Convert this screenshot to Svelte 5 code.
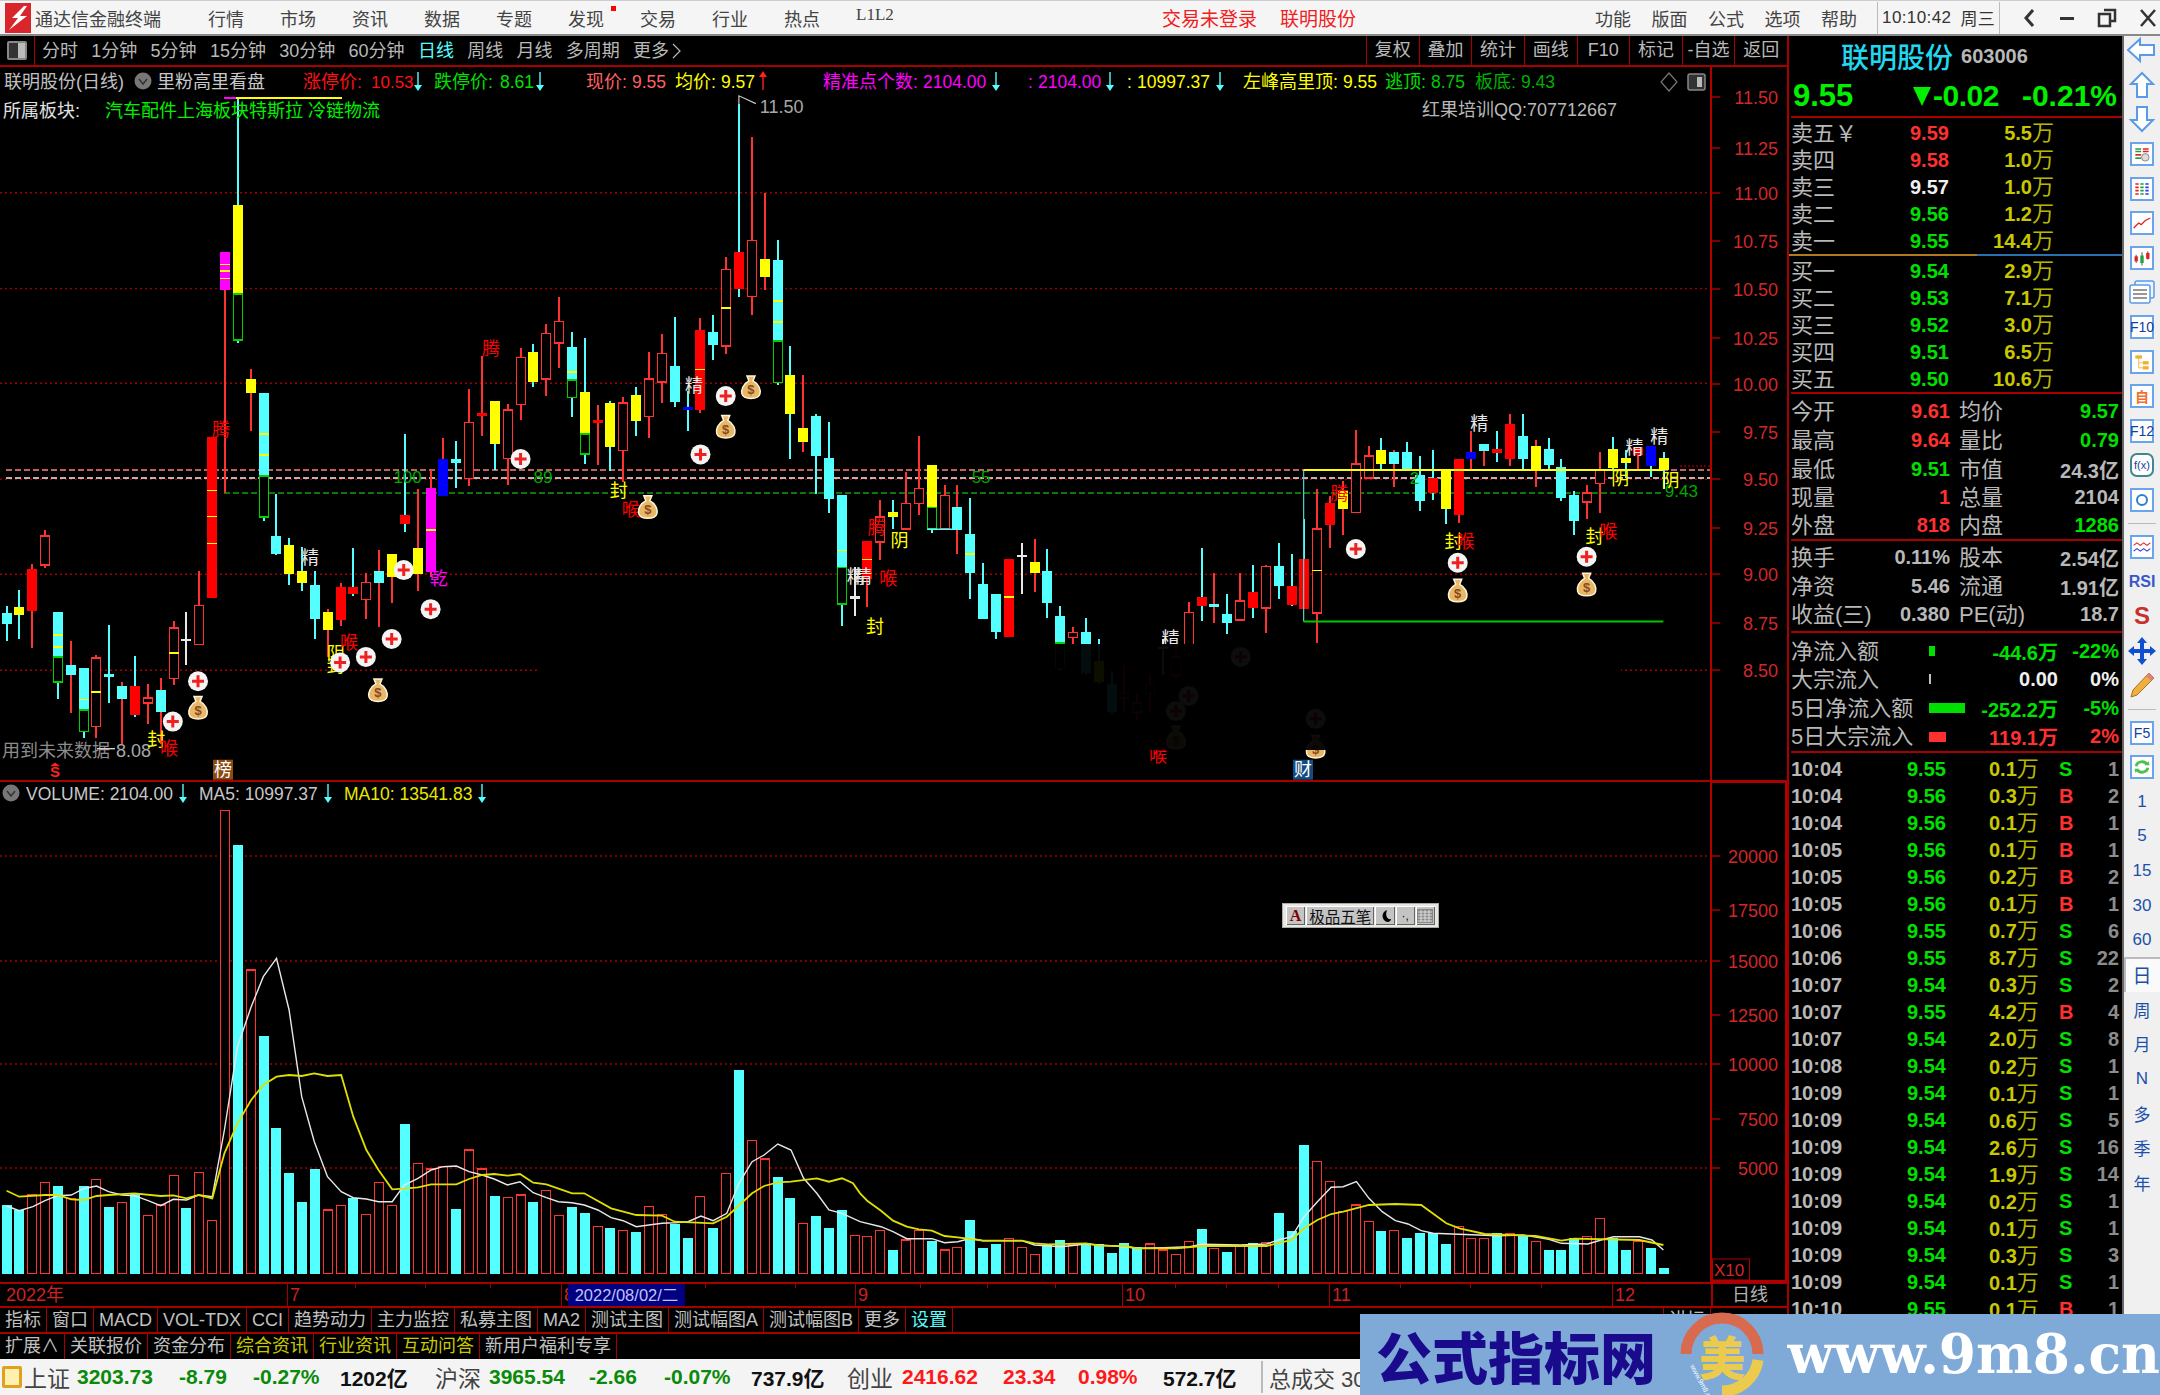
<script>
	// main-chart traces are in crop units: y = 60 + z / 2.178
	const yz = (z) => 60 + z / 2.178;
	const xi = (i) => 6.5 + 12.85 * i;
	const ax = (z) => z / 1.823;
	const bx = (z) => 860 + z / 1.668;
	const vy = (z) => 780 + z / 3;

	const COL = { r: '#ff3232', R: '#ff0000', c: '#54ffff', y: '#ffff00', m: '#ff00ff', b: '#0000ff', g: '#00d000', w: '#e8e8e8' };

	// hi, top, bottom, lo, body, wick, green-bottom, stripes
	const candles = [
		[1190, 1205, 1228, 1265, 'c', 'c'],
		[1155, 1192, 1208, 1262, 'y', 'c'],
		[1098, 1108, 1200, 1280, 'R', 'r'],
		[1023, 1037, 1100, 1107, 'r', 'r'],
		[1203, 1203, 1300, 1392, 'c', 'c', 1355, [1252, 1278]],
		[1265, 1317, 1339, 1423, 'c', 'r'],
		[1324, 1324, 1416, 1476, 'c', 'c', 1462, [1393]],
		[1295, 1302, 1452, 1476, 'r', 'r', 0, [1377]],
		[1230, 1340, 1340, 1400, 'c', 'c'],
		[1355, 1363, 1391, 1490, 'c', 'r'],
		[1298, 1363, 1427, 1430, 'R', 'c'],
		[1360, 1390, 1400, 1447, 'r', 'r'],
		[1345, 1373, 1420, 1490, 'c', 'r'],
		[1222, 1237, 1347, 1362, 'r', 'r', 0, [1292]],
		[1203, 1263, 1263, 1317, 'w', 'w'],
		[1112, 1188, 1273, 1273, 'r', 'r'],
		[821, 821, 1172, 1172, 'R', 'r', 0, [938, 994, 1053]],
		[419, 419, 502, 942, 'm', 'r', 0, [445, 460, 476]],
		[85, 315, 510, 617, 'y', 'c', 610],
		[674, 694, 725, 808, 'y', 'r'],
		[726, 726, 906, 1005, 'c', 'c', 995, [815, 860]],
		[945, 1037, 1075, 1078, 'c', 'c'],
		[1040, 1056, 1120, 1143, 'y', 'c'],
		[1060, 1112, 1140, 1157, 'y', 'c'],
		[1112, 1144, 1218, 1260, 'c', 'c'],
		[1195, 1203, 1241, 1300, 'y', 'r'],
		[1140, 1148, 1220, 1232, 'R', 'r'],
		[1063, 1148, 1162, 1168, 'R', 'c'],
		[1118, 1138, 1175, 1218, 'r', 'r'],
		[1068, 1112, 1140, 1235, 'c', 'r'],
		[1076, 1076, 1127, 1183, 'y', 'r'],
		[815, 991, 1011, 1028, 'R', 'c'],
		[935, 1063, 1120, 1157, 'y', 'r'],
		[893, 932, 1116, 1125, 'm', 'r', 0, [1024]],
		[824, 870, 950, 950, 'b', 'r'],
		[830, 870, 878, 932, 'c', 'c'],
		[716, 789, 911, 928, 'r', 'r'],
		[645, 772, 772, 818, 'R', 'r'],
		[742, 742, 836, 892, 'y', 'c'],
		[750, 762, 868, 925, 'r', 'r'],
		[628, 648, 750, 783, 'r', 'r'],
		[618, 635, 702, 712, 'y', 'c'],
		[575, 596, 695, 732, 'r', 'r'],
		[517, 570, 616, 670, 'r', 'r'],
		[592, 625, 697, 778, 'c', 'c', 735, [680]],
		[605, 723, 815, 880, 'y', 'c', 858],
		[752, 787, 787, 882, 'R', 'r'],
		[742, 746, 843, 895, 'y', 'c'],
		[735, 747, 851, 920, 'r', 'r'],
		[712, 730, 787, 818, 'y', 'c'],
		[635, 695, 776, 823, 'r', 'r'],
		[596, 639, 701, 748, 'r', 'r'],
		[560, 667, 745, 755, 'c', 'c'],
		[722, 759, 759, 807, 'b', 'c'],
		[563, 587, 763, 768, 'R', 'r', 0, [674]],
		[556, 592, 621, 653, 'c', 'c'],
		[430, 456, 623, 640, 'r', 'r', 0, [540]],
		[95, 419, 498, 516, 'R', 'c'],
		[168, 393, 515, 555, 'r', 'r'],
		[290, 434, 473, 500, 'y', 'r'],
		[393, 435, 612, 708, 'c', 'c', 702, [525, 570]],
		[622, 687, 770, 868, 'y', 'c'],
		[687, 801, 832, 853, 'y', 'r'],
		[772, 775, 862, 945, 'c', 'c'],
		[788, 867, 957, 987, 'c', 'c'],
		[948, 948, 1105, 1232, 'c', 'c', 1185, [1068]],
		[1105, 1170, 1170, 1210, 'w', 'w'],
		[1047, 1047, 1130, 1192, 'R', 'r', 0, [1088]],
		[958, 995, 1050, 1090, 'r', 'r'],
		[958, 984, 996, 1022, 'y', 'c'],
		[898, 966, 1022, 1022, 'r', 'r'],
		[820, 933, 966, 990, 'r', 'r'],
		[883, 883, 975, 1030, 'y', 'c', 1022],
		[925, 948, 1022, 1022, 'r', 'r'],
		[925, 974, 1022, 1075, 'c', 'r'],
		[955, 1033, 1117, 1173, 'c', 'c', 0, [1076]],
		[1095, 1141, 1218, 1218, 'c', 'c'],
		[1164, 1164, 1245, 1260, 'c', 'c'],
		[1087, 1087, 1257, 1257, 'R', 'r', 0, [1170]],
		[1052, 1080, 1080, 1163, 'w', 'w'],
		[1043, 1094, 1117, 1158, 'y', 'r'],
		[1065, 1112, 1183, 1216, 'c', 'c'],
		[1190, 1210, 1270, 1330, 'c', 'c', 1325],
		[1235, 1247, 1258, 1275, 'r', 'r'],
		[1216, 1246, 1335, 1340, 'c', 'c'],
		[1262, 1310, 1355, 1360, 'y', 'c'],
		[1330, 1360, 1420, 1425, 'c', 'c'],
		[1315, 1380, 1390, 1420, 'r', 'r'],
		[1380, 1400, 1420, 1440, 'r', 'r'],
		[1340, 1360, 1380, 1420, 'r', 'r'],
		[1262, 1280, 1280, 1340, 'w', 'w'],
		[1270, 1300, 1340, 1350, 'r', 'r'],
		[1180, 1203, 1275, 1275, 'r', 'r'],
		[1063, 1170, 1190, 1222, 'R', 'c'],
		[1118, 1184, 1192, 1227, 'c', 'r'],
		[1163, 1206, 1227, 1250, 'c', 'c'],
		[1118, 1178, 1220, 1222, 'r', 'r'],
		[1100, 1158, 1194, 1215, 'R', 'c'],
		[1100, 1103, 1193, 1247, 'r', 'r'],
		[1053, 1102, 1146, 1175, 'c', 'c'],
		[1076, 1145, 1187, 1190, 'R', 'c'],
		[1000, 1087, 1195, 1195, 'R', 'c'],
		[935, 1021, 1204, 1270, 'r', 'r', 0, [1112]],
		[950, 965, 1012, 1062, 'R', 'r'],
		[918, 938, 977, 1035, 'y', 'r'],
		[805, 880, 986, 986, 'r', 'r'],
		[840, 863, 910, 910, 'r', 'r'],
		[824, 850, 879, 893, 'y', 'c'],
		[850, 853, 879, 930, 'c', 'r'],
		[833, 853, 893, 893, 'c', 'c'],
		[862, 903, 960, 983, 'c', 'c'],
		[850, 911, 943, 958, 'R', 'c'],
		[893, 893, 977, 1010, 'y', 'c'],
		[870, 870, 990, 1008, 'R', 'r'],
		[808, 853, 869, 892, 'b', 'r'],
		[837, 837, 852, 885, 'c', 'r'],
		[808, 847, 855, 875, 'R', 'c'],
		[772, 792, 870, 885, 'R', 'r'],
		[772, 818, 868, 893, 'c', 'c'],
		[828, 841, 893, 930, 'y', 'r'],
		[824, 847, 882, 893, 'c', 'c'],
		[870, 886, 955, 960, 'c', 'c'],
		[938, 948, 1003, 1035, 'c', 'c'],
		[925, 943, 963, 1000, 'r', 'r'],
		[853, 893, 922, 987, 'r', 'r'],
		[822, 847, 888, 893, 'y', 'c'],
		[850, 866, 878, 910, 'y', 'c'],
		[842, 842, 860, 893, 'R', 'r'],
		[840, 840, 885, 908, 'b', 'c'],
		[853, 867, 893, 935, 'y', 'c']
	];

	const volumes = [
		'c1275', 'c1290', 'r1245', 'r1208', 'c1217', 'r1255', 'c1217', 'r1198', 'c1280', 'r1267', 'c1240', 'r1307', 'r1275', 'r1186', 'c1283', 'r1177', 'r1321', 'r92', 'c195', 'r570', 'c767', 'c1045', 'c1180', 'c1266', 'c1167', 'r1290', 'r1276', 'c1253', 'r1303', 'r1208', 'r1276', 'c1032', 'r1150', 'r1167', 'r1160', 'c1288', 'r1110', 'r1167', 'c1248', 'r1253', 'r1245', 'c1266', 'r1232', 'r1307', 'c1280', 'c1298', 'r1340', 'c1343', 'r1352', 'c1356', 'r1280', 'r1303', 'c1332', 'c1374', 'r1249', 'c1343', 'r1181', 'c870', 'r1082', 'r1137', 'c1190', 'c1253', 'r1331', 'c1307', 'c1343', 'c1290', 'r1366',
		'r1370', 'r1352', 'c1410', 'r1380', 'r1352', 'c1382', 'r1410', 'r1402', 'c1320', 'c1405', 'c1392', 'r1375', 'r1402', 'r1424', 'c1395', 'c1380', 'r1395', 'c1390', 'c1393', 'c1418', 'c1388', 'c1400', 'r1392', 'r1410', 'r1424', 'r1384', 'c1347', 'r1405', 'c1415', 'r1400', 'c1388', 'r1388', 'c1298', 'c1352', 'c1095', 'r1145', 'r1205', 'r1295', 'r1275', 'r1325', 'c1352', 'r1352', 'c1373', 'c1360', 'c1360', 'c1392', 'r1340', 'r1375', 'r1375', 'c1360', 'r1360', 'c1365', 'r1384', 'c1410', 'c1410', 'c1375', 'r1370', 'r1316', 'c1375', 'c1410', 'r1385', 'c1405', 'c1463'
	].map((v) => ({ kind: v[0], top: vy(+v.slice(1)) }));

	const line = (left, right) =>
		[...left.map(([x, y]) => `${ax(x).toFixed(1)},${vy(y).toFixed(1)}`), ...right.map(([x, y]) => `${bx(x).toFixed(1)},${vy(y).toFixed(1)}`)].join(' ');

	const ma5 = line(
		[[12, 1278], [35, 1292], [60, 1280], [82, 1262], [105, 1247], [130, 1245], [152, 1226], [176, 1218], [198, 1235], [222, 1245], [245, 1247], [270, 1262], [293, 1277], [316, 1258], [340, 1260], [362, 1245], [387, 1250], [409, 1050], [433, 800], [458, 680], [480, 590], [504, 535], [527, 690], [550, 950], [573, 1085], [597, 1190], [622, 1235], [644, 1253], [668, 1257], [690, 1265], [715, 1265], [737, 1215], [762, 1195], [786, 1170], [808, 1160], [832, 1158], [855, 1175], [879, 1185], [901, 1197], [925, 1215], [948, 1205], [972, 1238], [996, 1253], [1018, 1265], [1043, 1268], [1065, 1275], [1090, 1290], [1114, 1313], [1136, 1322], [1160, 1340], [1183, 1335], [1207, 1330], [1230, 1328], [1254, 1325], [1278, 1308], [1300, 1322], [1325, 1300], [1347, 1210], [1371, 1145], [1393, 1125], [1418, 1092], [1442, 1110], [1465, 1195], [1489, 1240], [1511, 1290], [1535, 1300], [1568, 1325]],
		[[35, 1340], [55, 1355], [78, 1376], [120, 1376], [141, 1388], [163, 1385], [185, 1375], [205, 1382], [270, 1382], [291, 1395], [336, 1400], [377, 1392], [441, 1400], [463, 1405], [507, 1403], [550, 1400], [570, 1393], [634, 1395], [678, 1392], [698, 1380], [720, 1370], [741, 1310], [763, 1265], [786, 1222], [806, 1220], [828, 1205], [849, 1255], [871, 1295], [893, 1322], [914, 1332], [936, 1352], [956, 1360], [1063, 1367], [1106, 1365], [1149, 1378], [1170, 1390], [1214, 1392], [1236, 1380], [1257, 1370], [1300, 1370], [1321, 1380], [1340, 1410]]
	);
	const ma10 = line(
		[[12, 1232], [35, 1250], [82, 1245], [105, 1245], [130, 1258], [152, 1260], [176, 1248], [198, 1245], [245, 1240], [293, 1248], [316, 1246], [340, 1255], [362, 1245], [387, 1255], [409, 1120], [433, 1030], [458, 960], [480, 915], [504, 890], [527, 885], [550, 888], [573, 880], [597, 888], [622, 885], [644, 1010], [668, 1110], [690, 1170], [715, 1228], [737, 1226], [762, 1222], [786, 1213], [832, 1213], [855, 1197], [879, 1185], [901, 1182], [925, 1187], [948, 1182], [972, 1208], [996, 1213], [1043, 1240], [1065, 1240], [1114, 1285], [1160, 1305], [1207, 1307], [1230, 1325], [1300, 1330], [1325, 1310], [1371, 1240], [1393, 1218], [1418, 1207], [1442, 1205], [1489, 1195], [1511, 1205], [1535, 1195], [1555, 1210], [1568, 1240]],
		[[12, 1262], [35, 1292], [55, 1322], [78, 1340], [98, 1348], [120, 1352], [141, 1368], [163, 1372], [205, 1382], [270, 1382], [291, 1390], [314, 1393], [377, 1390], [399, 1397], [441, 1398], [463, 1405], [528, 1405], [570, 1398], [678, 1398], [720, 1380], [741, 1345], [763, 1320], [786, 1302], [806, 1295], [849, 1275], [893, 1272], [936, 1275], [978, 1330], [1000, 1345], [1042, 1362], [1127, 1368], [1170, 1382], [1192, 1376], [1300, 1380], [1340, 1395]]
	);

	const grid = [289, 498, 704, 913, 1120, 1329].map(yz);
	const priceAxis = [['11.50', 97], ['11.25', 148], ['11.00', 193], ['10.75', 241], ['10.50', 289], ['10.25', 338], ['10.00', 384], ['9.75', 432], ['9.50', 479], ['9.25', 528], ['9.00', 574], ['8.75', 623], ['8.50', 670]];
	const volAxis = [['20000', 856], ['17500', 910], ['15000', 961], ['12500', 1015], ['10000', 1064], ['7500', 1119], ['5000', 1168]];

	const pluses = [[ax(361), 1353], [ax(315), 1441], [ax(949), 869], [ax(1277), 859], [ax(1323), 732], [ax(785), 1196], [ax(714), 1261], [ax(667), 1300], [ax(620), 1312], [ax(736), 1111], [bx(827), 1065], [bx(997), 1095], [bx(1212), 1082], [bx(635), 1300], [bx(548), 1385], [bx(527), 1418], [bx(760), 1435]];
	const bags = [[ax(361), 1410], [ax(689), 1372], [ax(1181), 973], [ax(1323), 798], [ax(1369), 712], [bx(997), 1155], [bx(1212), 1142], [bx(527), 1475], [bx(760), 1495]];

	const marks = [
		['腾', ax(403), 805, 'r'], ['腾', ax(895), 630, 'r'], ['腾', bx(28), 1020, 'r'], ['腾', bx(800), 945, 'r'],
		['精', ax(565), 1085, 'w'], ['精', ax(1265), 710, 'w'], ['精', ax(1560), 1125, 'w'], ['精', bx(5), 1125, 'w'], ['精', bx(1033), 792, 'w'], ['精', bx(1292), 845, 'w'], ['精', bx(1333), 822, 'w'], ['精', bx(518), 1262, 'w'],
		['封', ax(285), 1480, 'y'], ['封', ax(612), 1320, 'y'], ['封', ax(1128), 938, 'y'], ['封', bx(25), 1235, 'y'], ['封', bx(990), 1050, 'y'], ['封', bx(1225), 1038, 'y'],
		['阴', ax(612), 1293, 'y'], ['阴', bx(66), 1048, 'y'], ['阴', bx(1268), 912, 'y'], ['阴', bx(1352), 918, 'y'],
		['喉', ax(308), 1500, 'r'], ['喉', ax(636), 1270, 'r'], ['喉', ax(1150), 980, 'r'], ['喉', bx(47), 1130, 'r'], ['喉', bx(1010), 1050, 'r'], ['喉', bx(1248), 1028, 'r'], ['喉', bx(497), 1516, 'r'],
		['乾', ax(800), 1130, 'm']
	];

	const legend = [
		[4, '联明股份(日线)', '#c0c0c0', 18], [157, '里粉高里看盘', '#c8c8c8', 18],
		[303, '涨停价:', '#ff1010', 18], [371, '10.53', '#ff1010', 17],
		[434, '跌停价:', '#00e000', 18], [500, '8.61', '#00e000', 17.5],
		[586, '现价:', '#ff6060', 18], [632, '9.55', '#ff6060', 17.5],
		[675, '均价:', '#ffff00', 18], [721, '9.57', '#ffff00', 17.5],
		[823, '精准点个数:', '#ff00ff', 18], [923, '2104.00', '#ff00ff', 17.5],
		[1028, ':', '#ff00ff', 17.5], [1038, '2104.00', '#ff00ff', 17.5],
		[1127, ':', '#ffff00', 17.5], [1137, '10997.37', '#ffff00', 17.5],
		[1243, '左峰高里顶:', '#ffff00', 18], [1343, '9.55', '#ffff00', 17.5],
		[1385, '逃顶:', '#00e000', 18], [1431, '8.75', '#00c800', 17.5],
		[1475, '板底:', '#00b000', 18], [1521, '9.43', '#00b000', 17.5]
	];
	const legendArrows = [[418, 1, '#54ffff'], [540, 1, '#54ffff'], [763, -1, '#ff2020'], [996, 1, '#54ffff'], [1110, 1, '#54ffff'], [1220, 1, '#54ffff']];

	const menu = ['行情', '市场', '资讯', '数据', '专题', '发现', '交易', '行业', '热点', 'L1L2'];
	const menuRight = ['功能', '版面', '公式', '选项', '帮助'];
	const periods = [['分时'], ['1分钟'], ['5分钟'], ['15分钟'], ['30分钟'], ['60分钟'], ['日线', true], ['周线'], ['月线'], ['多周期'], ['更多']];
	const tools = ['复权', '叠加', '统计', '画线', 'F10', '标记', '-自选', '返回'];

	const months = [['7', 287], ['8', 561], ['9', 855], ['10', 1122], ['11', 1329], ['12', 1612]];
	const minor = [355, 425, 490, 628, 705, 795, 920, 987, 1055, 1175, 1226, 1278, 1400, 1470, 1541];

	const tabs1 = ['指标', '窗口', 'MACD', 'VOL-TDX', 'CCI', '趋势动力', '主力监控', '私募主图', 'MA2', '测试主图', '测试幅图A', '测试幅图B', '更多'];
	const tabs2 = [['扩展∧'], ['关联报价'], ['资金分布'], ['综合资讯', 'y'], ['行业资讯', 'y'], ['互动问答', 'y'], ['新用户福利专享']];

	const sells = [['卖五', '9.59', 'up', '5.5', '￥'], ['卖四', '9.58', 'up', '1.0'], ['卖三', '9.57', 'flat', '1.0'], ['卖二', '9.56', 'down', '1.2'], ['卖一', '9.55', 'down', '14.4']];
	const buys = [['买一', '9.54', '2.9'], ['买二', '9.53', '7.1'], ['买三', '9.52', '3.0'], ['买四', '9.51', '6.5'], ['买五', '9.50', '10.6']];

	const stats = [
		['今开', '9.61', 'up', '均价', '9.57', 'down'],
		['最高', '9.64', 'up', '量比', '0.79', 'down'],
		['最低', '9.51', 'down', '市值', '24.3亿', 'grey'],
		['现量', '1', 'up', '总量', '2104', 'grey'],
		['外盘', '818', 'up', '内盘', '1286', 'down']
	];
	const stats2 = [
		['换手', '0.11%', 'grey', '股本', '2.54亿', 'grey'],
		['净资', '5.46', 'grey', '流通', '1.91亿', 'grey'],
		['收益(三)', '0.380', 'grey', 'PE(动)', '18.7', 'grey']
	];
	const flows = [
		['净流入额', 6, 'down', '-44.6万', '-22%', 'down'],
		['大宗流入', 1.5, 'flat', '0.00', '0%', 'flat'],
		['5日净流入额', 36, 'down', '-252.2万', '-5%', 'down'],
		['5日大宗流入', 17, 'up', '119.1万', '2%', 'up']
	];
	const ticks = [
		['10:04', '9.55', '0.1', 'S', 1], ['10:04', '9.56', '0.3', 'B', 2], ['10:04', '9.56', '0.1', 'B', 1], ['10:05', '9.56', '0.1', 'B', 1], ['10:05', '9.56', '0.2', 'B', 2], ['10:05', '9.56', '0.1', 'B', 1], ['10:06', '9.55', '0.7', 'S', 6], ['10:06', '9.55', '8.7', 'S', 22], ['10:07', '9.54', '0.3', 'S', 2], ['10:07', '9.55', '4.2', 'B', 4], ['10:07', '9.54', '2.0', 'S', 8],
		['10:08', '9.54', '0.2', 'S', 1], ['10:09', '9.54', '0.1', 'S', 1], ['10:09', '9.54', '0.6', 'S', 5], ['10:09', '9.54', '2.6', 'S', 16], ['10:09', '9.54', '1.9', 'S', 14], ['10:09', '9.54', '0.2', 'S', 1], ['10:09', '9.54', '0.1', 'S', 1], ['10:09', '9.54', '0.3', 'S', 3], ['10:09', '9.54', '0.1', 'S', 1], ['10:10', '9.55', '0.1', 'B', 1]
	];
	const numbers = ['1', '5', '15', '30', '60'];
	const cycles = ['周', '月', 'N', '多', '季', '年'];

	const market = [
		['上证', 'name', 53], ['3203.73', 'down', 102], ['-8.79', 'down', 74], ['-0.27%', 'down', 87], ['1202亿', 'dark', 95],
		['沪深', 'name', 54], ['3965.54', 'down', 100], ['-2.66', 'down', 75], ['-0.07%', 'down', 87], ['737.9亿', 'dark', 96],
		['创业', 'name', 55], ['2416.62', 'up', 101], ['23.34', 'up', 75], ['0.98%', 'up', 85], ['572.7亿', 'dark', 98]
	];
</script>

<div class="app">
	<header class="menu">
		<svg class="logo" width="26" height="30" viewBox="0 0 26 30">
			<rect width="26" height="30" fill="#d8262c" />
			<path d="M19 3 L7 15 L13 15 L4 27 L22 13 L15 13 L22 3 Z" fill="#fff" />
		</svg>
		<span class="brand">通达信金融终端</span>
		<nav class="menu-main">
			{#each menu as item}
				<span class="menu-item" class:latin={item === 'L1L2'}>{item}{#if item === '发现'}<i class="dot"></i>{/if}</span>
			{/each}
		</nav>
		<span class="login">交易未登录</span>
		<span class="login stock">联明股份</span>
		<nav class="menu-right">
			{#each menuRight as item}
				<span>{item}</span>
			{/each}
		</nav>
		<div class="clock"><span>10:10:42</span><span>周三</span></div>
		<div class="win">
			<svg width="14" height="22" viewBox="0 0 14 22"><path d="M10 3 L3 11 L10 19" fill="none" stroke="#333" stroke-width="3" /></svg>
			<svg width="16" height="22" viewBox="0 0 16 22"><rect x="1" y="10" width="14" height="3" fill="#333" /></svg>
			<svg width="20" height="22" viewBox="0 0 20 22"><path d="M7 3 H18 V14 H14 M2 7 H13 V19 H2 Z" fill="none" stroke="#333" stroke-width="2.5" /></svg>
			<svg width="18" height="22" viewBox="0 0 18 22"><path d="M2 3 L16 19 M16 3 L2 19" stroke="#333" stroke-width="2.5" /></svg>
		</div>
	</header>

	<div class="workspace">
		<main class="left">
			<div class="toolbar">
				<div class="panel-toggle"><i></i></div>
				<div class="periods">
					{#each periods as [label, active]}
						<span class:active>{label}</span>
					{/each}
					<svg class="chev" width="9" height="16" viewBox="0 0 9 16"><path d="M1 1 L8 8 L1 15" fill="none" stroke="#b8b8b8" stroke-width="1.2" /></svg>
				</div>
				<div class="tool-btns">
					{#each tools as t}
						<span>{t}</span>
					{/each}
				</div>
			</div>

			<svg class="pane main-pane" viewBox="0 67 1787 713" width="1787" height="713">
				{#each grid as y}
					<line x1="0" x2="1711" y1={y} y2={y} class="dots" />
				{/each}
				<line x1="6" x2="1711" y1="470" y2="470" stroke="#ff8080" stroke-dasharray="6 3" stroke-width="1.3" />
				<line x1="6" x2="1711" y1="478" y2="478" stroke="#f0f0f0" stroke-dasharray="6 3" stroke-width="1.6" />
				<line x1="224" x2="1664" y1="493" y2="493" stroke="#10a010" stroke-dasharray="6 3" stroke-width="1.3" />
				<line x1="1680" x2="1711" y1="466" y2="466" stroke="#c00000" stroke-dasharray="2 2" />

				<line x1="224" x2="236" y1="98" y2="98" stroke="#ff00ff" stroke-width="2" />
				<line x1="236" x2="342" y1="98" y2="98" stroke="#ffff00" stroke-width="2" />

				<g shape-rendering="crispEdges">
					{#each candles as [hi, top, bot, lo, kind, wick, greenBot, stripes], i}
						{@const x = Math.round(xi(i))}
						<line x1={x} x2={x} y1={yz(hi)} y2={yz(lo)} stroke={COL[wick]} stroke-width="1.4" />
						{#if top === bot}
							<rect x={x - 5} y={yz(top) - 1} width="10" height="2.4" fill={COL[kind]} />
						{:else if kind === 'r'}
							<rect x={x - 4.5} y={yz(top)} width="9" height={(bot - top) / 2.178} fill="#000" stroke={COL.r} stroke-width="1.5" />
						{:else}
							<rect x={x - 5} y={yz(top)} width="10" height={(bot - top) / 2.178} fill={COL[kind]} />
						{/if}
						{#if greenBot}
							<rect x={x - 4.5} y={yz(bot)} width="9" height={(greenBot - bot) / 2.178} fill="#000" stroke={COL.g} stroke-width="1.5" />
						{/if}
						{#each stripes ?? [] as s}
							<rect x={x - 5} y={yz(s) - 0.8} width="10" height="1.6" fill="#ffff00" />
						{/each}
					{/each}
				</g>

				<polyline points="{bx(112)},{yz(1022)} {bx(170)},{yz(1022)}" fill="none" stroke="#54ffff" stroke-width="1.6" />
				<line x1={bx(740)} x2={bx(740)} y1={yz(893)} y2={yz(1223)} stroke="#54d0d0" stroke-width="1.2" />
				<line x1={bx(740)} x2={bx(1340)} y1={yz(893)} y2={yz(893)} stroke="#ffff00" stroke-width="2" />
				<line x1={bx(740)} x2={bx(1340)} y1={yz(1223)} y2={yz(1223)} stroke="#00c800" stroke-width="2" />

				<!-- price flag -->
				<path d="M{ax(1347)} {yz(96)} V{yz(78)} L{ax(1378)} {yz(95)}" fill="none" stroke="#c8c8c8" stroke-width="1.2" />
				<text x={ax(1385)} y={yz(102)} class="t" dominant-baseline="central" fill="#a8a8a8" font-size="18">11.50</text>
				<text x="2" y={yz(1505)} class="t" dominant-baseline="central" fill="#8c8c8c" font-size="18">用到未来数据</text>
				<line x1="97" x2="115" y1={yz(1500)} y2={yz(1500)} stroke="#d0d0d0" stroke-width="1.4" />
				<text x="116" y={yz(1505)} class="t" dominant-baseline="central" fill="#a8a8a8" font-size="18">8.08</text>

				{#each [[ax(743), 910, '100'], [ax(990), 910, '89'], [bx(202), 910, '55'], [bx(925), 912, '2'], [bx(1370), 940, '9.43']] as [x, z, t]}
					<text {x} y={yz(z)} class="t" text-anchor="middle" dominant-baseline="central" fill="#00a800" font-size="17">{t}</text>
				{/each}

				{#each marks as [t, x, z, c]}
					<text {x} y={yz(z)} class="t" text-anchor="middle" dominant-baseline="central" fill={c === 'r' ? '#ff0000' : COL[c]} font-size="18">{t}</text>
				{/each}

				{#each pluses as [x, z]}
					<g transform="translate({x} {yz(z)})">
						<circle r="10" fill="#f4f4f4" />
						<path d="M-6 0 H6 M0 -6 V6" stroke="#f02020" stroke-width="3" />
					</g>
				{/each}
				{#each bags as [x, z]}
					<g transform="translate({x} {yz(z)})">
						<path d="M-4 -11 H4 L2 -6 C8 -3 10 3 9 7 C8 11 4 11.5 0 11.5 C-4 11.5 -8 11 -9 7 C-10 3 -8 -3 -2 -6 Z" fill="#e8b868" stroke="#fff3d8" stroke-width="1.5" />
						<text y="3" text-anchor="middle" dominant-baseline="central" font-family="Liberation Sans, sans-serif" font-weight="700" font-size="13" fill="#8a4a20">$</text>
					</g>
				{/each}

				<!-- something sits over this part of the chart and blacks it out -->
				<rect x="537" y="644" width="1084" height="106" fill="#000" opacity=".95" />

				<path d="M55 {yz(1530)} L50 {yz(1538)} H60 Z" fill="#ff2020" />
				<text x="55" y={yz(1549)} class="t" text-anchor="middle" dominant-baseline="central" fill="#ff2020" font-weight="700" font-size="15">S</text>
				<rect x="213" y={yz(1524)} width="20" height="20" fill="#8a4a10" />
				<text x="223" y={yz(1546)} class="t" text-anchor="middle" dominant-baseline="central" fill="#fff" font-size="18">榜</text>
				<rect x="1293" y={yz(1524)} width="20" height="20" fill="#144a80" />
				<text x="1303" y={yz(1546)} class="t" text-anchor="middle" dominant-baseline="central" fill="#fff" font-size="18">财</text>

				<!-- legend -->
				{#each legend as [x, t, fill, size]}
					<text {x} y="82" class="t" dominant-baseline="central" {fill} font-size={size}>{t}</text>
				{/each}
				{#each legendArrows as [x, dir, c]}
					<path d="M{x} {81 - 9 * dir} V{81 + 5 * dir}" stroke={c} stroke-width="1.4" />
					<path d="M{x - 4} {81 + 4 * dir} H{x + 4} L{x} {81 + 10 * dir} Z" fill={c} />
				{/each}
				<circle cx="143" cy="81" r="8.5" fill="#777" />
				<path d="M139 79 L143 84 L147 79" fill="none" stroke="#333" stroke-width="1.5" />
				<text x="3" y="111" class="t" dominant-baseline="central" fill="#e0e0e0" font-size="18">所属板块:</text>
				<text x="105" y="111" class="t" dominant-baseline="central" fill="#00f000" font-size="18">汽车配件上海板块特斯拉 冷链物流</text>
				<text x="1422" y="110" class="t" dominant-baseline="central" fill="#b8b8b8" font-size="18">红果培训QQ:707712667</text>
				<path d="M1669 73 L1677 82 L1669 91 L1661 82 Z" fill="none" stroke="#777" stroke-width="1.2" />
				<rect x="1688" y="74" width="17" height="16" rx="2" fill="#333" stroke="#888" stroke-width="1.5" />
				<rect x="1697" y="77" width="5" height="10" fill="#bbb" />

				<!-- price axis -->
				<line x1="1711" x2="1711" y1="67" y2="780" class="axis" />
				{#each priceAxis as [t, y]}
					<line x1="1711" x2="1720" y1={y} y2={y} stroke="#b00000" stroke-width="1.4" />
					<text x="1778" y={y + 1} class="t num" text-anchor="end" dominant-baseline="central" font-size="18">{t}</text>
				{/each}
			</svg>

			<div class="vol-wrap">
				<svg class="pane vol-pane" viewBox="0 782 1787 500" width="1787" height="500">
					{#each [856, 961, 1064, 1168] as y}
						<line x1="0" x2="1711" y1={y} y2={y} class="dots" />
					{/each}
					<g shape-rendering="crispEdges">
						{#each volumes as v, i}
							{@const x = Math.round(xi(i))}
							{#if v.kind === 'c'}
								<rect x={x - 5} y={v.top} width="10" height={1273.5 - v.top} fill="#54ffff" />
							{:else}
								<rect x={x - 4.5} y={v.top} width="9" height={1273.5 - v.top} fill="#000" stroke="#ff3232" stroke-width="1.5" />
							{/if}
						{/each}
					</g>
					<polyline points={ma5} fill="none" stroke="#e8e8e8" stroke-width="1.4" />
					<polyline points={ma10} fill="none" stroke="#e0e000" stroke-width="1.8" />

					<circle cx="11" cy="793" r="8.5" fill="#777" />
					<path d="M7 791 L11 796 L15 791" fill="none" stroke="#333" stroke-width="1.5" />
					<text x="26" y="794" class="t" dominant-baseline="central" fill="#c8c8c8" font-size="17.5">VOLUME: 2104.00</text>
					<text x="199" y="794" class="t" dominant-baseline="central" fill="#c8c8c8" font-size="17.5">MA5: 10997.37</text>
					<text x="344" y="794" class="t" dominant-baseline="central" fill="#e8e800" font-size="17.5">MA10: 13541.83</text>
					{#each [183, 328, 482] as x}
						<path d="M{x} 784 V798" stroke="#54ffff" stroke-width="1.4" />
						<path d="M{x - 4} 797 H{x + 4} L{x} 803 Z" fill="#54ffff" />
					{/each}

					<rect x="1711" y="782" width="75" height="499" fill="none" stroke="#b00000" stroke-width="2" />
					{#each volAxis as [t, y]}
						<line x1="1711" x2="1720" y1={y} y2={y} stroke="#b00000" stroke-width="1.4" />
						<text x="1778" y={y + 1} class="t num" text-anchor="end" dominant-baseline="central" font-size="18">{t}</text>
					{/each}
					<rect x="1712.5" y="1259" width="37" height="21" fill="none" stroke="#b00000" />
					<text x="1714" y="1270" class="t num" dominant-baseline="central" font-size="17">X10</text>
				</svg>
				<div class="ime">
					<b>A</b>
					<span class="ime-name">极品五笔</span>
					<span class="ime-key"><svg width="12" height="14" viewBox="0 0 12 14"><path d="M8 1 C2 3 2 11 8 13 C11 13 12 11 12 10 C8 11 6 6 8 1 Z" /></svg></span>
					<span class="ime-key small">·,</span>
					<span class="ime-key"><svg width="16" height="14" viewBox="0 0 16 14"><rect width="16" height="14" fill="#888" /><path d="M1 3 H15 M1 6 H15 M1 9 H15 M1 12 H15 M4 1 V13 M8 1 V13 M12 1 V13" stroke="#ddd" /></svg></span>
				</div>
			</div>

			<div class="xaxis">
				<span class="year">2022年</span>
				{#each months as [t, x]}
					<span class="month" style="left:{x}px">{t}</span>
				{/each}
				{#each minor as x}
					<i class="tick" style="left:{x}px"></i>
				{/each}
				<span class="cursor">2022/08/02/二</span>
				<span class="period-name">日线</span>
			</div>

			<div class="tabs">
				{#each tabs1 as t}
					<span>{t}</span>
				{/each}
				<span class="cyan">设置</span>
				<span class="tail">讲坛</span>
			</div>
			<div class="tabs second">
				{#each tabs2 as [t, c]}
					<span class:yellow={c === 'y'}>{t}</span>
				{/each}
			</div>
		</main>

		<aside class="quote">
			<div class="q-title"><b>联明股份</b><span>603006</span></div>
			<div class="q-price"><span class="last">9.55</span><span class="chg"><i></i>-0.02</span><span class="pct">-0.21%</span></div>

			<section class="book sells">
				{#each sells as [label, price, cls, vol, mark]}
					<div class="book-row">
						<span class="lab">{label}{#if mark}<em>{mark}</em>{/if}</span>
						<span class="n {cls}">{price}</span>
						<span class="vol"><b>{vol}</b>万</span>
					</div>
				{/each}
			</section>
			<div class="mid"><i></i><i></i></div>
			<section class="book buys">
				{#each buys as [label, price, vol]}
					<div class="book-row">
						<span class="lab">{label}</span>
						<span class="n down">{price}</span>
						<span class="vol"><b>{vol}</b>万</span>
					</div>
				{/each}
			</section>

			<section class="stats">
				{#each stats as [a, av, ac, b, bv, bc]}
					<div class="stat-row">
						<div class="pair"><span class="lab">{a}</span><span class="n {ac}">{av}</span></div>
						<div class="pair"><span class="lab">{b}</span><span class="n {bc}">{bv}</span></div>
					</div>
				{/each}
			</section>
			<section class="stats tight">
				{#each stats2 as [a, av, ac, b, bv, bc]}
					<div class="stat-row">
						<div class="pair"><span class="lab">{a}</span><span class="n {ac}">{av}</span></div>
						<div class="pair"><span class="lab">{b}</span><span class="n {bc}">{bv}</span></div>
					</div>
				{/each}
			</section>
			<section class="flows">
				{#each flows as [label, w, barCls, val, pct, cls]}
					<div class="flow-row">
						<span class="lab">{label}</span>
						<span class="bar-cell"><i class={barCls} style="width:{w}px"></i></span>
						<span class="n {cls}">{val}</span>
						<span class="n {cls}">{pct}</span>
					</div>
				{/each}
			</section>
			<section class="ticks">
				{#each ticks as [time, price, vol, side, count]}
					<div class="tick-row">
						<span class="n grey">{time}</span>
						<span class="n down">{price}</span>
						<span class="vol tick-vol"><b>{vol}</b>万</span>
						<span class="n {side === 'S' ? 'down' : 'up'}">{side}</span>
						<span class="n count">{count}</span>
					</div>
				{/each}
			</section>
		</aside>

		<aside class="sidebar">
			<div class="ic first"><svg width="32" height="28" viewBox="0 0 32 28"><path d="M2 14 L14 3 V9 H28 V19 H14 V25 Z" fill="#fff" stroke="#5a9be8" stroke-width="2" /></svg></div>
			<div class="ic"><svg width="28" height="28" viewBox="0 0 28 28"><path d="M14 2 L25 13 H19 V26 H9 V13 H3 Z" fill="#fff" stroke="#5a9be8" stroke-width="2" /></svg></div>
			<div class="ic"><svg width="28" height="28" viewBox="0 0 28 28"><path d="M14 26 L25 15 H19 V2 H9 V15 H3 Z" fill="#fff" stroke="#5a9be8" stroke-width="2" /></svg></div>
			<div class="ic"><svg class="box" viewBox="0 0 24 24"><path d="M4 6 H11 M4 9 H11" stroke="#20a040" stroke-width="2" /><path d="M13 6 H20 M13 9 H20" stroke="#e02020" stroke-width="2" /><path d="M4 13 H11" stroke="#e02020" stroke-width="2" /><path d="M4 17 H11" stroke="#20a040" stroke-width="2" /><circle cx="16" cy="16" r="4.5" fill="#ddd" stroke="#777" /></svg></div>
			<div class="ic"><svg class="box" viewBox="0 0 24 24"><path d="M4 6 H8 M4 10 H8 M4 14 H8 M4 18 H8" stroke="#e02020" stroke-width="2" /><path d="M10 6 H14 M10 10 H14 M10 14 H14 M10 18 H14" stroke="#20a040" stroke-width="2" /><path d="M16 6 H20 M16 10 H20 M16 14 H20 M16 18 H20" stroke="#2040e0" stroke-width="2" /></svg></div>
			<div class="ic"><svg class="box" viewBox="0 0 24 24"><path d="M2 18 L8 12 L11 14 L16 9 L22 6" fill="none" stroke="#e02020" stroke-width="1.6" /></svg></div>
			<div class="ic"><svg class="box" viewBox="0 0 24 24"><path d="M5 8 V18 M12 5 V21 M19 4 V14" stroke="#333" /><rect x="3" y="10" width="4" height="6" fill="#e02020" /><rect x="10" y="9" width="4" height="9" fill="#20a040" /><rect x="17" y="6" width="4" height="7" fill="#e02020" /></svg></div>
			<div class="ic"><svg width="28" height="26" viewBox="0 0 28 26"><rect x="7" y="2" width="19" height="17" rx="2" fill="#eef4ff" stroke="#5a9be8" stroke-width="1.5" /><rect x="2" y="6" width="20" height="18" rx="2" fill="#fff" stroke="#5a9be8" stroke-width="1.5" /><path d="M5 11 H19 M5 15 H19 M5 19 H19" stroke="#777" stroke-width="1.6" /></svg></div>
			<div class="ic"><span class="box txt">F10</span></div>
			<div class="ic"><svg class="box" viewBox="0 0 24 24"><rect x="4" y="4" width="8" height="4" fill="#f0b030" /><path d="M8 8 V19 H13 M8 13 H13" stroke="#f0b030" fill="none" /><rect x="13" y="11" width="7" height="4" fill="#f0b030" /><rect x="13" y="17" width="7" height="4" fill="#f0b030" /></svg></div>
			<div class="ic"><span class="box txt orange">自</span></div>
			<div class="ic"><span class="box txt">F12</span></div>
			<div class="ic"><span class="box txt fx">f(x)</span></div>
			<div class="ic"><svg class="box" viewBox="0 0 24 24"><circle cx="12" cy="12" r="6" fill="none" stroke="#2f7fd0" stroke-width="2.4" /></svg></div>
			<hr />
			<div class="ic"><svg class="box" viewBox="0 0 24 24"><path d="M2 10 L6 7 L10 10 L14 7 L18 10 L22 7" fill="none" stroke="#e02020" stroke-width="1.3" /><path d="M2 17 L6 14 L10 17 L14 14 L18 17 L22 14" fill="none" stroke="#3030e0" stroke-width="1.3" /></svg></div>
			<div class="ic"><span class="rsi">RSI</span></div>
			<div class="ic"><span class="dollar">S</span></div>
			<div class="ic"><svg width="30" height="30" viewBox="0 0 30 30"><path d="M15 1 L20 7 H17 V13 H23 V10 L29 15 L23 20 V17 H17 V23 H20 L15 29 L10 23 H13 V17 H7 V20 L1 15 L7 10 V13 H13 V7 H10 Z" fill="#1050d0" /></svg></div>
			<div class="ic"><svg width="28" height="30" viewBox="0 0 28 30"><path d="M21 3 L26 8 L9 25 L3 27 L5 20 Z" fill="#f0b040" stroke="#a87020" /><path d="M21 3 L26 8 L23 11 L18 6 Z" fill="#e08080" /></svg></div>
			<hr />
			<div class="ic"><span class="box txt">F5</span></div>
			<div class="ic"><svg class="box" viewBox="0 0 24 24"><path d="M5 11 C6 5 15 4 18 9 M19 13 C18 19 9 20 6 15" fill="none" stroke="#50c050" stroke-width="3.5" /><path d="M15 10 L21 10 L20 5 Z M9 14 L3 14 L4 19 Z" fill="#50c050" /></svg></div>
			{#each numbers as n}
				<div class="ic lab-ic">{n}</div>
			{/each}
			<div class="ic lab-ic selected">日</div>
			{#each cycles as c}
				<div class="ic lab-ic">{c}</div>
			{/each}
		</aside>
	</div>

	<footer class="status">
		<i class="gold"></i>
		{#each market as [t, cls, w]}
			<span class="m {cls}" style="width:{w}px">{t}</span>
		{/each}
		<span class="total">总成交 3068亿</span>
	</footer>

	<div class="banner">
		<strong>公式指标网</strong>
		<svg width="90" height="86" viewBox="0 0 90 86">
			<path d="M9 42 A36 36 0 0 1 81 42" fill="none" stroke="#d86a50" stroke-width="11" />
			<path d="M81 48 A36 36 0 0 1 45 79" fill="none" stroke="#eccb4c" stroke-width="11" />
			<text x="45" y="43" text-anchor="middle" dominant-baseline="central" font-family="Noto Sans CJK SC, sans-serif" font-weight="900" font-size="46" fill="#eccb4c">美</text>
			<text x="0" y="0" transform="translate(13 54) rotate(62)" font-family="Liberation Sans, sans-serif" font-size="7" fill="#fff">www.9m8.cn</text>
		</svg>
		<em>www.9m8.cn</em>
	</div>
</div>

<style>
	:global(body) {
		margin: 0;
		background: #000;
		overflow: hidden;
	}

	.app {
		position: relative;
		width: 2160px;
		height: 1395px;
		overflow: hidden;
		display: flex;
		flex-direction: column;
		font-family: 'Liberation Sans', 'Noto Sans CJK SC', sans-serif;
		color: #c0c0c0;
	}

	/* top menu */
	.menu {
		height: 36px;
		box-sizing: border-box;
		flex: none;
		display: flex;
		align-items: center;
		background: #f5f5f5;
		border-top: 1px solid #ccc;
		border-bottom: 2px solid #8a8a8a;
		color: #444;
		font-size: 18px;
		position: relative;
	}
	.logo {
		margin-left: 5px;
		flex: none;
	}
	.brand {
		margin-left: 4px;
		width: 173px;
	}
	.menu-main {
		display: flex;
		width: 954px;
	}
	.menu-item {
		width: 72px;
		position: relative;
	}
	.menu-item.latin {
		font-family: 'Liberation Serif', serif;
		font-size: 17px;
	}
	.dot {
		position: absolute;
		left: 43px;
		top: 1px;
		width: 5px;
		height: 5px;
		background: #f00;
	}
	.login {
		color: #f02020;
		font-size: 19px;
		margin-right: 23px;
	}
	.stock {
		margin-right: 239px;
	}
	.menu-right {
		display: flex;
		gap: 20.5px;
		width: 282px;
	}
	.clock {
		display: flex;
		align-items: center;
		gap: 9px;
		height: 32px;
		padding: 0 4px;
		border-left: 1px solid #bbb;
		border-right: 1px solid #bbb;
		font-size: 17px;
		letter-spacing: 0.4px;
		color: #333;
		white-space: nowrap;
	}
	.win {
		display: flex;
		align-items: center;
		gap: 22px;
		margin-left: 23px;
	}

	.workspace {
		flex: 1;
		min-height: 0;
		display: flex;
	}
	.left {
		width: 1787px;
		flex: none;
		display: flex;
		flex-direction: column;
	}

	/* period toolbar */
	.toolbar {
		height: 31px;
		flex: none;
		box-sizing: border-box;
		display: flex;
		border-bottom: 2px solid #a80000;
		background: #000;
		font-size: 18px;
		color: #b8b8b8;
	}
	.panel-toggle {
		width: 35px;
		flex: none;
		box-sizing: border-box;
		border-right: 1px solid #a80000;
		display: flex;
		align-items: center;
		justify-content: center;
	}
	.panel-toggle i {
		width: 16px;
		height: 15px;
		border: 2px solid #888;
		border-radius: 2px;
		background: linear-gradient(90deg, #333 55%, #bbb 55%);
	}
	.periods {
		display: flex;
		gap: 13.3px;
		padding-left: 7px;
		align-items: center;
		line-height: 28px;
		width: 1324px;
		white-space: nowrap;
	}
	.periods .active {
		color: #54ffff;
	}
	.chev {
		margin-left: -10px;
	}
	.tool-btns {
		display: grid;
		grid-template-columns: repeat(8, 1fr);
		flex: 1;
	}
	.tool-btns span {
		border-left: 1px solid #a80000;
		text-align: center;
		line-height: 28px;
	}

	.pane {
		display: block;
		flex: none;
		background: #000;
	}
	.main-pane {
		border-bottom: 0;
	}
	.t {
		font-family: 'Liberation Sans', 'Noto Sans CJK SC', sans-serif;
	}
	.num {
		fill: #d02828;
	}
	.dots {
		stroke: #a00000;
		stroke-width: 1.4;
		stroke-dasharray: 2 3;
	}
	.axis {
		stroke: #b00000;
		stroke-width: 2;
	}

	.vol-wrap {
		position: relative;
		border-top: 2px solid #a80000;
		flex: none;
	}
	.ime {
		position: absolute;
		left: 1282px;
		top: 121px;
		width: 157px;
		height: 25px;
		box-sizing: border-box;
		padding: 2px 3px;
		background: #e8e8e0;
		border: 1px solid #aaa;
		display: flex;
		gap: 1px;
		font-size: 16px;
		color: #111;
	}
	.ime b,
	.ime span {
		background: #c4c4c4;
		box-shadow: inset 1px 1px #fff, inset -1px -1px #666;
		display: flex;
		align-items: center;
		justify-content: center;
	}
	.ime b {
		width: 20px;
		color: #800000;
		font-family: 'Liberation Serif', serif;
	}
	.ime-name {
		width: 71px;
		font-size: 15.5px;
	}
	.ime-key {
		width: 20px;
	}
	.small {
		font-size: 12px;
	}

	/* date axis */
	.xaxis {
		position: relative;
		height: 22px;
		flex: none;
		border-top: 2px solid #a80000;
		border-bottom: 2px solid #a80000;
		background: #000;
		color: #d02020;
		font-size: 18px;
		line-height: 22px;
	}
	.year {
		margin-left: 6px;
	}
	.month {
		position: absolute;
		top: 0;
		height: 22px;
		border-left: 1px solid #a00000;
		padding-left: 2px;
	}
	.tick {
		position: absolute;
		top: 0;
		width: 1px;
		height: 4px;
		background: #a00000;
	}
	.cursor {
		position: absolute;
		left: 568px;
		top: 0;
		width: 117px;
		background: #000080;
		color: #c0c0ff;
		font-size: 16.5px;
		text-align: center;
		white-space: nowrap;
	}
	.period-name {
		position: absolute;
		left: 1711px;
		width: 76px;
		box-sizing: border-box;
		border-left: 2px solid #a80000;
		text-align: center;
		color: #b0b0b0;
	}

	/* bottom tabs */
	.tabs {
		display: flex;
		height: 26px;
		flex: none;
		box-sizing: border-box;
		border-bottom: 2px solid #a80000;
		background: #000;
		font-size: 18px;
		color: #c0c0c0;
		line-height: 24px;
		white-space: nowrap;
	}
	.tabs span {
		padding: 0 5px;
		border-right: 1px solid #a80000;
	}
	.tabs .cyan {
		color: #54ffff;
	}
	.tabs .tail {
		margin-left: auto;
		margin-right: 76px;
		border-left: 1px solid #a80000;
	}
	.tabs .yellow {
		color: #c8c800;
	}
	.second {
		height: 27px;
	}

	/* quote column */
	.quote {
		width: 337px;
		flex: none;
		box-sizing: border-box;
		border-left: 2px solid #a80000;
		border-right: 2px solid #666;
		background: #000;
		padding-left: 2px;
		overflow: hidden;
	}
	.q-title {
		height: 40px;
		display: flex;
		align-items: center;
		padding-left: 50px;
		gap: 8px;
	}
	.q-title b {
		font-size: 28px;
		font-weight: 500;
		color: #20d8f0;
	}
	.q-title span {
		font-size: 20px;
		font-weight: 700;
		color: #b8b8b8;
	}
	.q-price {
		height: 42px;
		box-sizing: border-box;
		border-bottom: 2px solid #a80000;
		position: relative;
		color: #00f000;
		font-weight: 700;
		font-size: 30px;
		line-height: 40px;
	}
	.last {
		position: absolute;
		left: 2px;
		font-size: 31px;
	}
	.chg {
		position: absolute;
		left: 122px;
		display: flex;
		align-items: center;
		gap: 2px;
		letter-spacing: -0.5px;
	}
	.chg i {
		width: 0;
		height: 0;
		border-left: 9px solid transparent;
		border-right: 9px solid transparent;
		border-top: 19px solid #00f000;
	}
	.pct {
		position: absolute;
		right: 5px;
	}
	.book-row {
		height: 27px;
		display: grid;
		grid-template-columns: 119px 50px 94px;
		align-items: center;
	}
	.sells {
		height: 136px;
		box-sizing: border-box;
		padding-top: 1.5px;
		overflow: hidden;
	}
	.lab {
		font-size: 22px;
		line-height: 27px;
		color: #b8b8b8;
		white-space: nowrap;
	}
	.lab em {
		font-style: normal;
		margin-left: 0;
	}
	.n {
		font-size: 20px;
		font-weight: 700;
		text-align: right;
		white-space: nowrap;
	}
	.book .n {
		text-align: left;
	}
	.up {
		color: #ff3030;
	}
	.down {
		color: #00e000;
	}
	.flat {
		color: #f0f0f0;
	}
	.grey {
		color: #b8b8b8;
	}
	.vol {
		display: flex;
		align-items: center;
		justify-content: flex-end;
		color: #b8b800;
		font-size: 22px;
		line-height: 24px;
		height: 27px;
		white-space: nowrap;
	}
	.vol b {
		font-size: 20px;
		color: #c8c800;
	}
	.mid {
		height: 2px;
		display: grid;
		grid-template-columns: 188px 1fr;
		margin-left: -2px;
	}
	.mid i:first-child {
		background: #b07a20;
	}
	.mid i:last-child {
		background: #2a70b0;
	}
	.buys {
		padding-top: 1.5px;
		height: 138px;
		box-sizing: border-box;
		border-bottom: 2px solid #a80000;
	}
	.stats {
		padding: 3.5px 0 0 0;
		box-sizing: border-box;
		height: 147px;
		border-bottom: 2px solid #a80000;
	}
	.stat-row {
		display: grid;
		grid-template-columns: 159px 160px;
		gap: 9px;
		height: 28.5px;
		align-items: center;
	}
	.pair {
		display: flex;
		justify-content: space-between;
		align-items: center;
	}
	.tight {
		height: 92px;
		padding-top: 2px;
	}
	.flows {
		height: 120px;
		box-sizing: border-box;
		padding-top: 3.5px;
		border-bottom: 2px solid #a80000;
	}
	.flow-row {
		display: grid;
		grid-template-columns: 138px 40px 89px 61px;
		height: 28.5px;
		align-items: center;
	}
	.bar-cell i {
		display: block;
		height: 10px;
	}
	.bar-cell .down {
		background: #00e000;
	}
	.bar-cell .up {
		background: #ff3030;
	}
	.bar-cell .flat {
		background: #c0c0c0;
	}
	.ticks {
		padding-top: 2.5px;
	}
	.tick-row {
		display: grid;
		grid-template-columns: 116px 82px 70px 20px 40px;
		height: 27.05px;
		align-items: center;
	}
	.tick-row .n {
		text-align: left;
	}
	.tick-row .count {
		text-align: right;
		color: #8c8c8c;
	}
	.tick-vol {
		justify-content: flex-start;
	}

	/* right sidebar */
	.sidebar {
		flex: 1;
		background: #f0f0f0;
		display: flex;
		flex-direction: column;
		align-items: center;
	}
	.ic {
		height: 34.6px;
		flex: none;
		display: flex;
		align-items: center;
		justify-content: center;
		width: 100%;
	}
	.ic.first {
		margin-top: -3px;
	}
	.box {
		width: 24px;
		height: 24px;
		box-sizing: border-box;
		background: #fff;
		border: 2px solid #6aa4ea;
		display: block;
	}
	.txt {
		display: flex;
		align-items: center;
		justify-content: center;
		color: #1040a0;
		font-size: 14px;
	}
	.orange {
		color: #f07030;
		font-weight: 700;
	}
	.fx {
		font-size: 11px;
		border-radius: 7px;
		border-color: #408890;
	}
	.rsi {
		color: #3858c8;
		font-weight: 700;
		font-size: 16px;
	}
	.dollar {
		color: #c83030;
		font-weight: 700;
		font-size: 24px;
	}
	hr {
		width: 28px;
		margin: 5.75px 0;
		border: 0;
		border-top: 1px solid #bbb;
		height: 0;
		flex: none;
	}
	.lab-ic {
		color: #1c50a8;
		font-size: 17px;
	}
	.selected {
		background: #fafafa;
		box-shadow: inset 2px 2px #bbb;
		font-size: 19px;
	}

	/* index strip */
	.status {
		height: 36px;
		flex: none;
		box-sizing: border-box;
		display: flex;
		align-items: center;
		background: #f4f4f4;
		padding-left: 2px;
		font-size: 21px;
		white-space: nowrap;
	}
	.gold {
		width: 20px;
		height: 22px;
		box-sizing: border-box;
		border: 3px solid #e0a020;
		background: #fff0b0;
		border-radius: 2px;
		margin-right: 2px;
		flex: none;
	}
	.m {
		flex: none;
		font-weight: 700;
	}
	.m.name {
		font-weight: 400;
		font-size: 23px;
		color: #444;
	}
	.m.down {
		color: #0a8a0a;
	}
	.m.up {
		color: #ff1818;
	}
	.m.dark {
		color: #111;
	}
	.total {
		border-left: 2px solid #bbb;
		padding-left: 6px;
		font-size: 22px;
		color: #444;
	}

	/* site banner laid over the corner */
	.banner {
		position: absolute;
		left: 1360px;
		top: 1314px;
		width: 800px;
		height: 81px;
		background: #7faad8;
		display: flex;
		align-items: center;
	}
	.banner strong {
		margin-left: 16px;
		width: 300px;
		font-size: 56px;
		font-weight: 900;
		letter-spacing: 0;
		color: #1a0a8c;
		white-space: nowrap;
		font-family: 'Noto Sans CJK SC', sans-serif;
	}
	.banner svg {
		margin-left: 8px;
		flex: none;
	}
	.banner em {
		margin-left: 20px;
		font-style: normal;
		font-family: 'DejaVu Serif', serif;
		font-weight: 700;
		font-size: 53.5px;
		color: #fff;
		white-space: nowrap;
	}
</style>
